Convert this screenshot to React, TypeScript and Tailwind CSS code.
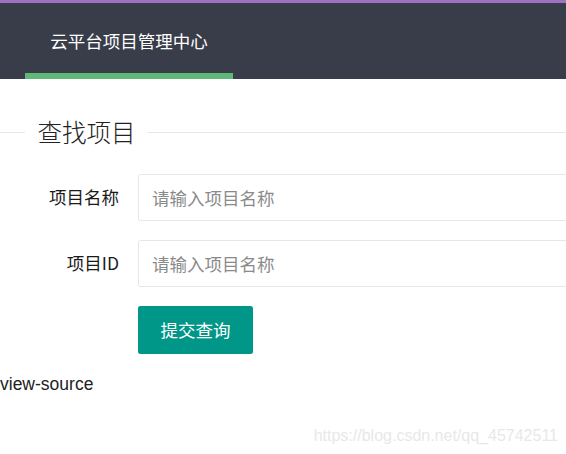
import React from 'react';

const cjk = "font-['Microsoft_YaHei','Noto_Sans_CJK_SC',sans-serif]";

export default function App() {
  const fields = [
    { label: '项目名称', placeholder: '请输入项目名称' },
    { label: '项目ID', placeholder: '请输入项目名称' },
  ];

  return (
    <div className={`relative w-[566px] h-[454px] overflow-hidden bg-white ${cjk}`}>
      {/* Header */}
      <div className="h-[3px] bg-[#a071c2]" />
      <header className="h-[76px] bg-[#393d49] flex pl-[25px]">
        <div className="relative w-[208px] flex items-center justify-center">
          <span className="text-white text-[17.5px] leading-none">云平台项目管理中心</span>
          <div className="absolute left-0 right-0 bottom-0 h-[6px] bg-[#5fb878]" />
        </div>
      </header>

      {/* Field title */}
      <div className="mt-[33px] h-[41px] flex items-center">
        <div className="w-[25px] h-px bg-[#e6e6e6]" />
        <span className="px-[12.5px] text-[24.5px] font-light text-[#222] leading-none">查找项目</span>
        <div className="flex-1 h-px bg-[#e6e6e6]" />
      </div>

      {/* Form */}
      <form className="mt-[21px] w-[760px]">
        {fields.map((f, i) => (
          <div key={i} className="flex items-center mb-[19px]">
            <label className="w-[138px] pr-[19px] text-right text-[17.5px] text-[#1a1a1a]">{f.label}</label>
            <input
              className="flex-1 h-[47px] border border-[#e6e6e6] rounded-[2.5px] pl-[13px] text-[17.5px] outline-none placeholder:text-[#8a8a8a]"
              placeholder={f.placeholder}
            />
          </div>
        ))}
        <div className="pl-[138px]">
          <button
            type="button"
            className="h-[48px] w-[115px] rounded-[2.5px] bg-[#009688] text-white text-[17.5px]"
          >
            提交查询
          </button>
        </div>
      </form>

      <div className="mt-[19px] font-['Liberation_Sans',Arial,sans-serif] text-[17.5px] leading-[22px] text-[#222]">
        view-source
      </div>

      {/* Watermark */}
      <div className="absolute right-[8px] top-[426px] font-['Liberation_Sans',Arial,sans-serif] text-[16px] leading-[20px] text-[#e8e8e8]">
        https://blog.csdn.net/qq_45742511
      </div>
    </div>
  );
}
